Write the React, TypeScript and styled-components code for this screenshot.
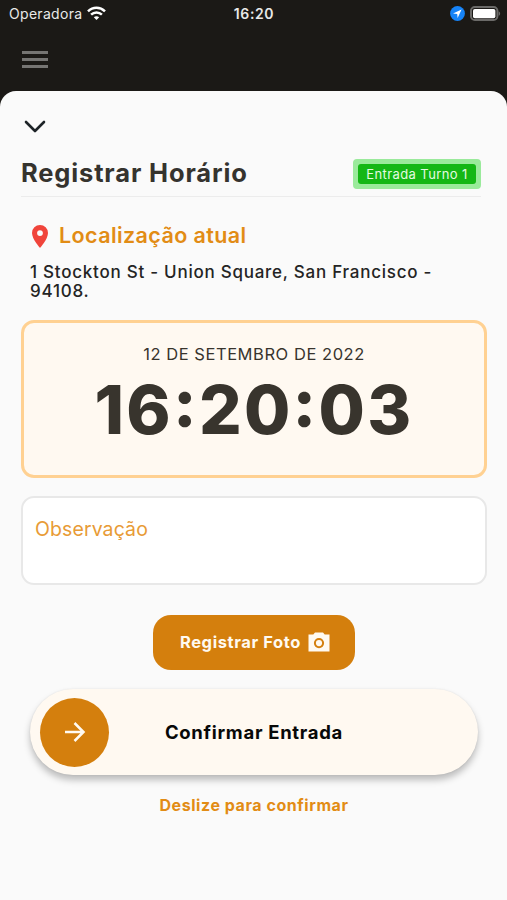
import React from 'react';
import styled, { createGlobalStyle } from 'styled-components';

const GlobalStyle = createGlobalStyle`
  * { box-sizing: border-box; }
  body { margin: 0; background: #1b1916; }
`;

const Screen = styled.div`
  width: 100%;
  height: 900px;
  display: flex;
  flex-direction: column;
  overflow: hidden;
  background: #1b1916;
  font-family: Inter, 'Liberation Sans', sans-serif;
`;

const StatusBar = styled.header`
  height: 28px;
  flex: none;
  display: grid;
  grid-template-columns: 1fr auto 1fr;
  align-items: center;
  padding: 0 6px 0 9px;
  color: #e9e9e8;
`;

const StatusGroup = styled.div<{ $end?: boolean }>`
  display: flex;
  align-items: center;
  justify-content: ${(p) => (p.$end ? 'flex-end' : 'flex-start')};
  gap: 5px;
  svg { display: block; margin-top: -2px; }
`;

const Carrier = styled.span`
  font-size: 14px;
  line-height: 28px;
  letter-spacing: 0.3px;
`;

const StatusTime = styled.span`
  font-size: 14px;
  line-height: 28px;
  font-weight: 600;
  letter-spacing: 0.6px;
  margin-left: -2px;
`;

const NavBar = styled.nav`
  height: 63px;
  flex: none;
  display: flex;
  align-items: center;
  padding: 0 22px;
`;

const MenuButton = styled.button`
  width: 26px;
  padding: 0;
  border: 0;
  background: none;
  display: grid;
  gap: 4px;
`;

const MenuLine = styled.span`
  height: 3px;
  background: #767573;
`;

const Sheet = styled.main`
  flex: 1;
  display: flex;
  flex-direction: column;
  padding: 0 20px 0 21px;
  border-radius: 16px 16px 0 0;
  background: #fafafa;
`;

const CollapseButton = styled.button`
  align-self: flex-start;
  margin: 29px 0 0 3px;
  padding: 0;
  border: 0;
  background: none;
  height: 13px;
  svg { display: block; }
`;

const TitleRow = styled.div`
  display: flex;
  align-items: center;
  justify-content: space-between;
  height: 64px;
  margin-right: 6px;
  padding-top: 18px;
  border-bottom: 1px solid #ececec;
`;

const Title = styled.h1`
  margin: -2px 0 0;
  font-size: 25.5px;
  line-height: 32px;
  font-weight: 650;
  letter-spacing: 0.85px;
  color: #35332e;
  white-space: nowrap;
`;

const Badge = styled.span`
  width: 128px;
  height: 30px;
  border: 5px solid #9aea9b;
  border-radius: 4px;
  background: #9aea9b;
  display: flex;
`;

const BadgeLabel = styled.span`
  flex: 1;
  border-radius: 3px;
  background: #14b715;
  color: #e3fbe0;
  font-size: 13px;
  line-height: 20px;
  text-align: center;
  letter-spacing: 0.4px;
  white-space: nowrap;
`;

const LocationHeading = styled.h2`
  display: flex;
  align-items: center;
  gap: 11px;
  margin: 25px 0 0 11px;
  height: 28px;
  font-size: 21.5px;
  font-weight: 600;
  letter-spacing: 0.4px;
  color: #e28c15;
  white-space: nowrap;
`;

const LocationText = styled.span`
  margin-top: -3px;
`;

const Address = styled.p`
  margin: 13px 0 0 9px;
  font-size: 17px;
  line-height: 18.5px;
  font-weight: 500;
  letter-spacing: 0.75px;
  color: #242424;
`;

const AddressLine = styled.span`
  display: block;
  white-space: nowrap;
`;

const ClockCard = styled.section`
  margin-top: 20px;
  height: 158px;
  flex: none;
  border: 3.5px solid #ffd192;
  border-radius: 13px;
  background: #fff9f1;
  display: flex;
  flex-direction: column;
  align-items: center;
  color: #38342d;
`;

const ClockDate = styled.span`
  margin-top: 19px;
  font-size: 16.5px;
  line-height: 24px;
  letter-spacing: 0.55px;
  white-space: nowrap;
`;

const ClockTime = styled.time`
  margin-top: 6px;
  font-size: 67px;
  line-height: 76px;
  font-weight: 800;
  letter-spacing: 2.3px;
  font-feature-settings: 'case';
  white-space: nowrap;
`;

const Notes = styled.textarea`
  display: block;
  flex: none;
  margin: 18px 0 0;
  height: 89px;
  width: 100%;
  padding: 18px 12px;
  resize: none;
  outline: none;
  border: 2px solid #e8e8e8;
  border-radius: 13px;
  background: #fff;
  font-family: inherit;
  font-size: 19.5px;
  line-height: 26px;
  letter-spacing: 0.1px;
  &::placeholder { color: #e89b36; opacity: 1; }
`;

const PhotoButton = styled.button`
  align-self: center;
  flex: none;
  display: flex;
  align-items: center;
  justify-content: center;
  gap: 7px;
  width: 202px;
  height: 55px;
  margin-top: 30px;
  padding: 0 0 2px 2px;
  border: 0;
  border-radius: 18px;
  background: #d47f0d;
  color: #fffaf1;
  font-family: inherit;
  font-size: 16.5px;
  font-weight: 700;
  letter-spacing: 0.6px;
  white-space: nowrap;
`;

const SlideTrack = styled.div`
  flex: none;
  display: flex;
  align-items: center;
  height: 86px;
  margin: 19px 9px 0;
  padding-left: 10px;
  border-radius: 43px;
  background: #fff9f1;
  box-shadow: 0 5px 7px rgba(0, 0, 0, 0.25), 0 0 2px rgba(0, 0, 0, 0.08);
`;

const SlideHandle = styled.button`
  flex: none;
  width: 69px;
  height: 69px;
  padding: 0;
  border: 0;
  border-radius: 50%;
  background: #d47f0d;
  display: grid;
  place-items: center;
`;

const SlideLabel = styled.span`
  flex: 1;
  padding-right: 79px;
  text-align: center;
  font-size: 18.5px;
  font-weight: 650;
  letter-spacing: 0.7px;
  color: #080808;
  white-space: nowrap;
`;

const Hint = styled.p`
  margin: 19px 0 0;
  text-align: center;
  font-size: 16px;
  line-height: 22px;
  font-weight: 650;
  letter-spacing: 0.55px;
  color: #e28c15;
  white-space: nowrap;
`;

const WifiIcon = () => (
  <svg width="19" height="15" viewBox="0 0 19 15" fill="none" stroke="#fff" strokeWidth="2.5">
    <path d="M1 5.3C5.8.6 13.2.6 18 5.3" />
    <path d="M4.1 8.7c3-2.9 7.8-2.9 10.8 0" />
    <path d="M6.8 11.3c1.5-1.5 3.9-1.5 5.4 0L9.5 14z" fill="#fff" stroke="none" />
  </svg>
);

const LocationArrowIcon = () => (
  <svg width="15" height="15" viewBox="0 0 15 15">
    <circle cx="7.5" cy="7.5" r="7.4" fill="#1683f7" />
    <path d="M11.6 3.4 3 7.4l4.2.5.4 4.1z" fill="#fff" />
  </svg>
);

const BatteryIcon = () => (
  <svg width="31" height="15" viewBox="0 0 31 15">
    <rect x="1" y="1" width="26.4" height="13" rx="3.8" fill="none" stroke="#6b6a68" strokeWidth="2" />
    <rect x="3" y="2.9" width="22.4" height="9.3" rx="1.8" fill="#fff" />
    <path d="M28.6 5.2c2 .8 2 3.8 0 4.6z" fill="#6b6a68" />
  </svg>
);

const ChevronIcon = () => (
  <svg width="22" height="13" viewBox="0 0 22 13" fill="none" stroke="#1d2327" strokeWidth="2.6" strokeLinecap="round" strokeLinejoin="round">
    <path d="M2 2l9 9 9-9" />
  </svg>
);

const PinIcon = () => (
  <svg width="16" height="23" viewBox="0 0 16 23">
    <path fillRule="evenodd" fill="#f0443b" d="M8 0a8 8 0 0 0-8 8c0 6 8 15 8 15s8-9 8-15a8 8 0 0 0-8-8zm0 5.2a2.9 2.9 0 1 1 0 5.8 2.9 2.9 0 0 1 0-5.8z" />
  </svg>
);

const CameraIcon = () => (
  <svg width="22" height="20" viewBox="0 0 22 20">
    <path fillRule="evenodd" fill="#fffaf1" d="M7 .5h8l1.7 2H21.5v17H.5v-17h4.8zM11 6a5.1 5.1 0 1 0 0 10.2a5.1 5.1 0 0 0 0-10.2z" />
    <circle cx="11" cy="11.1" r="3.1" fill="#fffaf1" />
  </svg>
);

const ArrowIcon = () => (
  <svg width="22" height="22" viewBox="0 0 22 22" fill="none" stroke="#fffaf1" strokeWidth="2.5">
    <path d="M1 11h18.5M10.500 2l9 9-9 9" />
  </svg>
);

export default function App() {
  return (
    <>
      <GlobalStyle />
      <Screen>
        <StatusBar>
          <StatusGroup>
            <Carrier>Operadora</Carrier>
            <WifiIcon />
          </StatusGroup>
          <StatusTime>16:20</StatusTime>
          <StatusGroup $end>
            <LocationArrowIcon />
            <BatteryIcon />
          </StatusGroup>
        </StatusBar>
        <NavBar>
          <MenuButton aria-label="Menu">
            <MenuLine />
            <MenuLine />
            <MenuLine />
          </MenuButton>
        </NavBar>
        <Sheet>
          <CollapseButton aria-label="Fechar">
            <ChevronIcon />
          </CollapseButton>
          <TitleRow>
            <Title>Registrar Horário</Title>
            <Badge>
              <BadgeLabel>Entrada Turno 1</BadgeLabel>
            </Badge>
          </TitleRow>
          <LocationHeading>
            <PinIcon />
            <LocationText>Localização atual</LocationText>
          </LocationHeading>
          <Address>
            <AddressLine>1 Stockton St - Union Square, San Francisco -</AddressLine>
            <AddressLine>94108.</AddressLine>
          </Address>
          <ClockCard>
            <ClockDate>12 DE SETEMBRO DE 2022</ClockDate>
            <ClockTime>16:20:03</ClockTime>
          </ClockCard>
          <Notes placeholder="Observação" />
          <PhotoButton>
            Registrar Foto
            <CameraIcon />
          </PhotoButton>
          <SlideTrack>
            <SlideHandle aria-label="Confirmar">
              <ArrowIcon />
            </SlideHandle>
            <SlideLabel>Confirmar Entrada</SlideLabel>
          </SlideTrack>
          <Hint>Deslize para confirmar</Hint>
        </Sheet>
      </Screen>
    </>
  );
}
